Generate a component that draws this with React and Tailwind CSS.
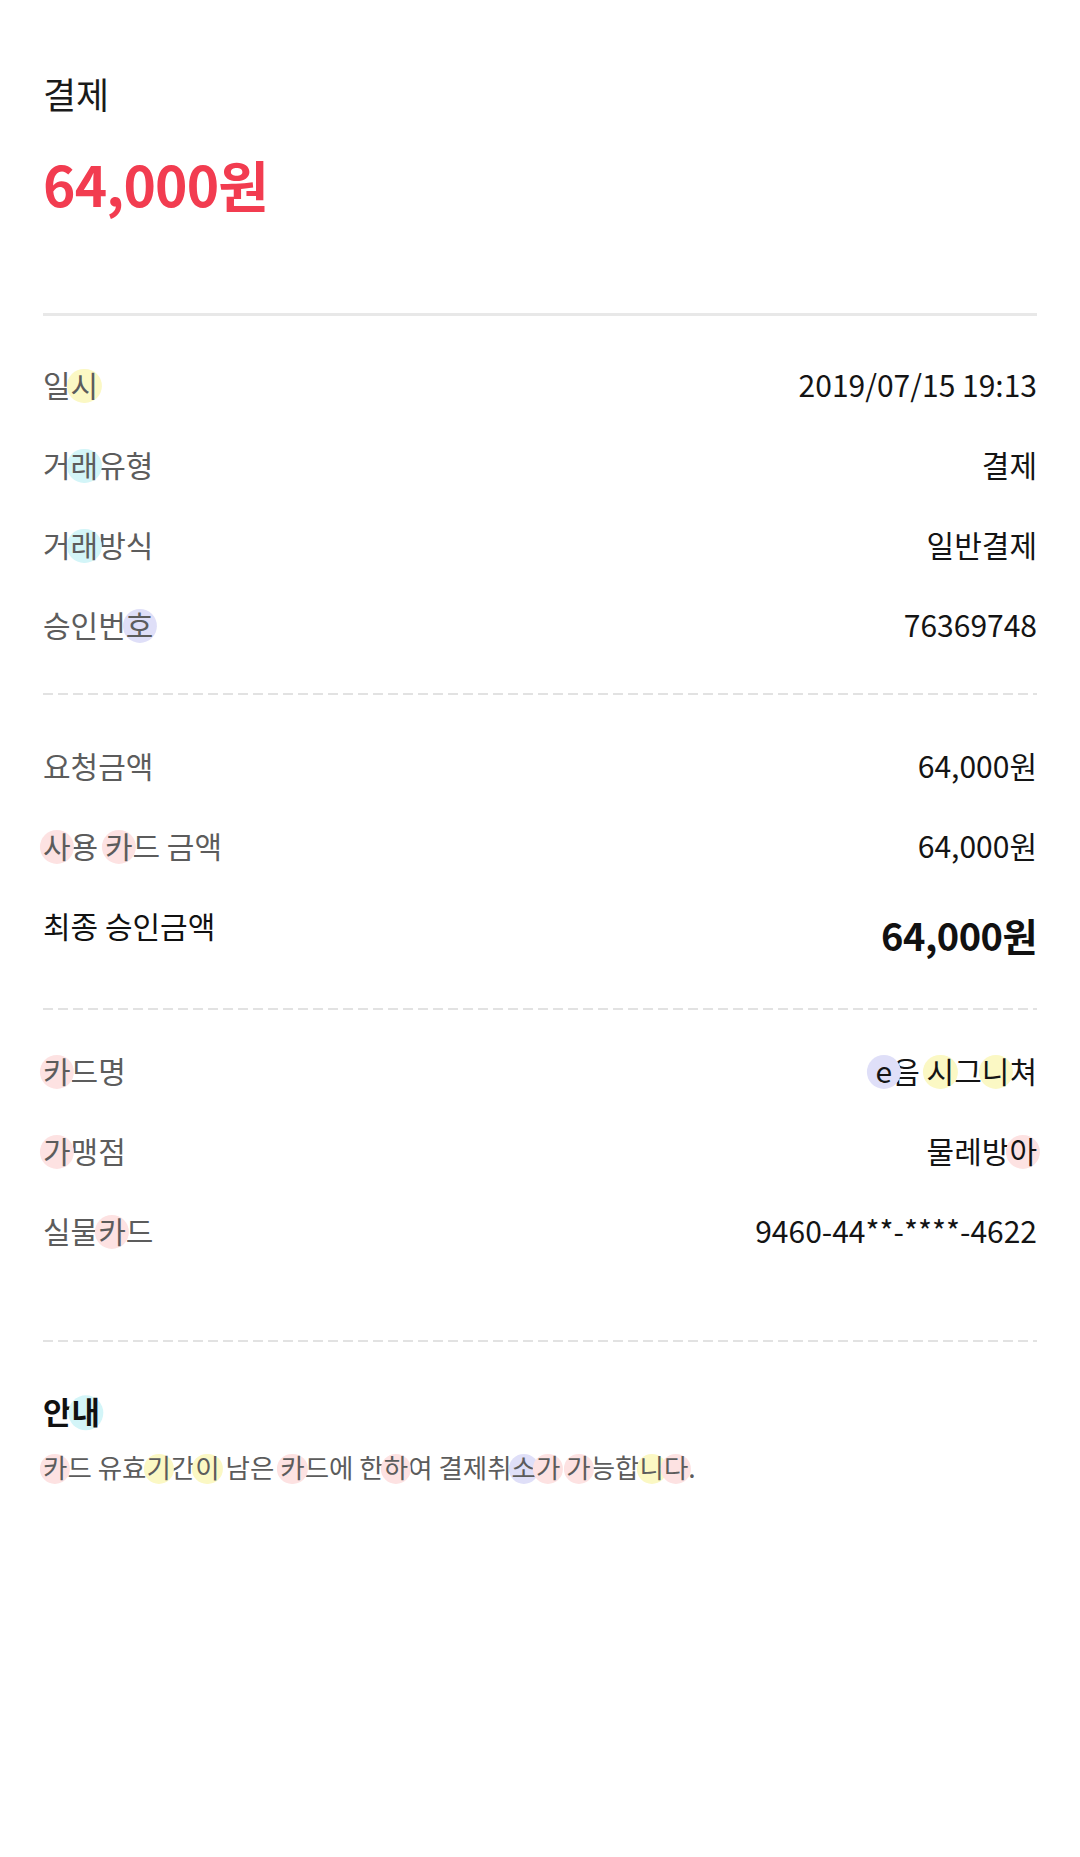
import React from "react";

const COLORS = {
    y: "bg-[#fbf8c4]",
    c: "bg-[#d3f5f8]",
    v: "bg-[#dfdff8]",
    p: "bg-[#fde2e2]",
};

// a syllable with the soft pastel dot behind it
function Hi({ c, children }) {
    return (
        <span className="relative inline-block">
            <span className={`absolute left-1/2 top-[54%] w-[1.14em] h-[1.14em] -translate-x-1/2 -translate-y-1/2 rounded-full ${COLORS[c]}`} />
            <span className="relative">{children}</span>
        </span>
    );
}

function Dashed({ className = "" }) {
    return (
        <div className={`h-[2px] bg-[image:repeating-linear-gradient(to_right,#e2e2e2_0,#e2e2e2_10px,transparent_10px,transparent_15px)] ${className}`} />
    );
}

function Row({ label, value }) {
    return (
        <div className="flex h-[80px] items-center justify-between">
            <span className="text-[30px] text-[#5c5c5c]">{label}</span>
            <span className="text-[30px] text-[#141414]">{value}</span>
        </div>
    );
}

export default function App() {
    return (
        <div className="min-h-screen bg-white px-[43px] pt-[69px] font-['Noto_Sans_CJK_KR','Noto_Sans',sans-serif]">
            {/* Header */}
            <h1 className="text-[36px] leading-[48px] text-[#1a1a1a]">결제</h1>
            <p className="mt-[34px] text-[55px] leading-[64px] font-bold text-[#f23c50] tracking-[-0.8px]">64,000원</p>

            <div className="mt-[98px] h-[3px] bg-[#e8e8e8]" />

            {/* 거래 정보 */}
            <div className="pt-[28px] pb-[29px]">
                <Row label={<>일<Hi c="y">시</Hi></>} value="2019/07/15 19:13" />
                <Row label={<>거<Hi c="c">래</Hi>유형</>} value="결제" />
                <Row label={<>거<Hi c="c">래</Hi>방식</>} value="일반결제" />
                <Row label={<>승인번<Hi c="v">호</Hi></>} value="76369748" />
            </div>

            <Dashed />

            {/* 금액 */}
            <div className="pt-[30px] pb-[43px]">
                <Row label="요청금액" value="64,000원" />
                <Row label={<><Hi c="p">사</Hi>용 <Hi c="p">카</Hi>드 금액</>} value="64,000원" />
                <div className="flex h-[80px] items-center justify-between">
                    <span className="text-[30px] text-[#111]">최종 승인금액</span>
                    <span className="pt-[18px] text-[38px] font-bold text-[#111] tracking-[-0.5px]">64,000원</span>
                </div>
            </div>

            <Dashed />

            {/* 카드 */}
            <div className="pt-[20px] pb-[70px]">
                <Row label={<><Hi c="p">카</Hi>드명</>} value={<><Hi c="v">e</Hi>음 <Hi c="y">시</Hi>그<Hi c="y">니</Hi>쳐</>} />
                <Row label={<><Hi c="p">가</Hi>맹점</>} value={<>물레방<Hi c="p">아</Hi></>} />
                <Row label={<>실물<Hi c="p">카</Hi>드</>} value="9460-44**-****-4622" />
            </div>

            <Dashed />

            {/* 안내 */}
            <div className="pt-[48px]">
                <h2 className="text-[31px] leading-[42px] font-bold text-[#111]">안<Hi c="c">내</Hi></h2>
                <p className="mt-[16px] text-[26.5px] leading-[38px] text-[#5c5c5c]">
                    <Hi c="p">카</Hi>드 유효<Hi c="y">기</Hi>간<Hi c="y">이</Hi> 남은 <Hi c="p">카</Hi>드에 한<Hi c="p">하</Hi>여 결제취<Hi c="v">소</Hi><Hi c="p">가</Hi> <Hi c="p">가</Hi>능합<Hi c="y">니</Hi><Hi c="p">다</Hi>.
                </p>
            </div>
        </div>
    );
}
